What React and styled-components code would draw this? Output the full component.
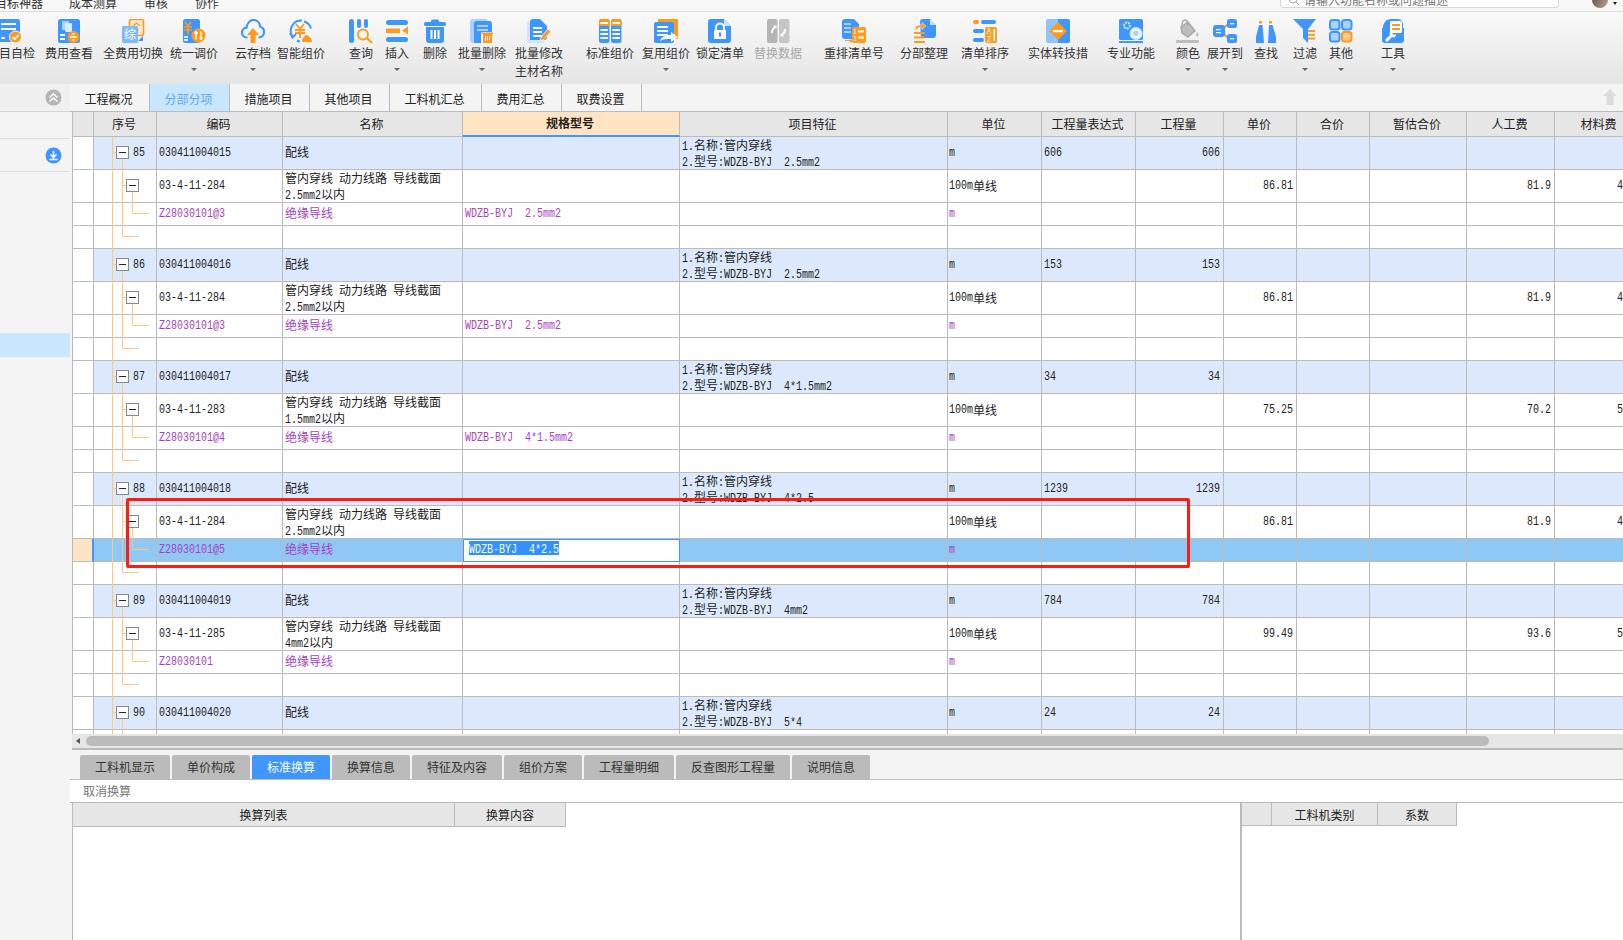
import React from 'react'
import styled, { createGlobalStyle } from 'styled-components'

const BLUE = '#3f96ff'
const ORANGE = '#ff9a1e'
const LIGHT = '#a9d2ff'
const LINE = '#bbbbbb'
const PURPLE = '#a83fc4'
const CJK = '"Noto Sans CJK SC", "Noto Sans", sans-serif'
const COLS = '21px 63px 126px 180px 217px 268px 94px 94px 88px 73px 73px 97px 88px 90px'

const GlobalStyle = createGlobalStyle`
    html, body {
        margin: 0;
        padding: 0;
        background: #fff;
    }
`

const Page = styled.div`
    position: relative;
    width: 1623px;
    height: 940px;
    overflow: hidden;
    display: flex;
    flex-direction: column;
    font-family: ${CJK};
    font-size: 12px;
    color: #222;
`

const TopBar = styled.div`
    flex: none;
    box-sizing: border-box;
    height: 12px;
    display: flex;
    align-items: flex-start;
    padding-right: 6px;
    overflow: hidden;
    background: #f8f8f8;
    border-bottom: 1px solid #dcdcdc;
`

const TopMenu = styled.span`
    margin-top: -6px;
    margin-left: ${p => p.$gap}px;
    line-height: 18px;
    color: #333;
    white-space: nowrap;
`

const SearchBox = styled.div`
    box-sizing: border-box;
    width: 279px;
    height: 20px;
    margin-top: -12px;
    margin-left: auto;
    padding: 0 0 1px 7px;
    display: flex;
    align-items: flex-end;
    gap: 4px;
    background: #fff;
    border: 1px solid #d8d8d8;
    border-radius: 3px;
    line-height: 12px;
    color: #777;
`

const Avatar = styled.div`
    width: 16px;
    height: 16px;
    margin-top: -8px;
    margin-left: 33px;
    border-radius: 50%;
    background: linear-gradient(120deg, #5b4a42, #b7a596);
`

const AvatarCaret = styled.div`
    width: 0;
    height: 0;
    margin: 2px 0 0 5px;
    border-left: 2px solid transparent;
    border-right: 2px solid transparent;
    border-top: 3px solid #222;
`

const Toolbar = styled.div`
    flex: none;
    height: 72px;
    display: flex;
    align-items: flex-start;
    overflow: hidden;
    background: linear-gradient(#f9f9f9, #e5e5e5);
`

const Tool = styled.div`
    flex: none;
    width: ${p => p.$w}px;
    margin-left: ${p => p.$gap}px;
    padding-top: 7px;
    display: flex;
    flex-direction: column;
    align-items: center;
    color: ${p => (p.$off ? '#a8a8a8' : '#333')};
`

const ToolIcon = styled.svg`
    flex: none;
    display: block;
    width: 24px;
    height: 24px;
`

const ToolLabel = styled.div`
    margin-top: 1px;
    line-height: 18px;
    text-align: center;
    white-space: nowrap;
`

const Caret = styled.div`
    margin-top: 6px;
    width: 0;
    height: 0;
    border-left: 3px solid transparent;
    border-right: 3px solid transparent;
    border-top: 3px solid #666;
`

const Body = styled.div`
    flex: 1;
    min-height: 0;
    display: flex;
`

const Sidebar = styled.div`
    flex: none;
    width: 70px;
    background: #f4f4f4;
`

const SideHead = styled.div`
    box-sizing: border-box;
    height: 28px;
    padding-right: 8px;
    display: flex;
    align-items: center;
    justify-content: flex-end;
    background: #f0f0f0;
    border-bottom: 1px solid #d4d4d4;
`

const SideRow = styled.div`
    box-sizing: border-box;
    height: ${p => p.$h}px;
    padding-right: 8px;
    display: flex;
    align-items: center;
    justify-content: flex-end;
    border-bottom: 1px solid #dedede;
`

const SideGap = styled.div`
    height: 161px;
`

const SideActive = styled.div`
    height: 24px;
    background: #c9e6ff;
`

const Main = styled.div`
    flex: 1;
    min-width: 0;
    display: flex;
    flex-direction: column;
    background: #f4f4f4;
`

const TabRow = styled.div`
    flex: none;
    box-sizing: border-box;
    height: 28px;
    display: flex;
    align-items: stretch;
    padding-right: 6px;
    border-bottom: 1px solid ${LINE};
`

const TopTab = styled.div`
    box-sizing: border-box;
    width: ${p => p.$w}px;
    padding: 2px 2px 0 0;
    display: flex;
    align-items: center;
    justify-content: center;
    border-right: 1px solid ${LINE};
    background: ${p => (p.$active ? '#c9e6ff' : 'transparent')};
    color: ${p => (p.$active ? '#5ea8f5' : '#222')};
`

const UpArrow = styled.svg`
    width: 14px;
    height: 16px;
    margin: 5px 0 0 auto;
`

const GridView = styled.div`
    flex: none;
    height: 622px;
    margin-left: 2px;
    overflow: hidden;
    background: #fff;
    border-left: 1px solid ${LINE};
`

const Row = styled.div`
    display: grid;
    grid-template-columns: ${COLS};
    width: 1572px;
    height: ${p => p.$h}px;
    background: ${p => p.$bg || '#fff'};
`

const HeadCell = styled.div`
    box-sizing: border-box;
    padding: 0 2px 2px 0;
    display: flex;
    align-items: center;
    justify-content: center;
    white-space: nowrap;
    background: ${p => (p.$focus ? '#ffe4c4' : '#e6e6e6')};
    font-weight: ${p => (p.$focus ? 700 : 400)};
    border-right: 1px solid ${LINE};
    border-bottom: ${p => (p.$focus ? `2px solid ${BLUE}` : `1px solid ${LINE}`)};
`

const Lat = styled.span`
    display: inline-block;
    font-family: "Liberation Mono", monospace;
    font-size: 10px;
    line-height: 12px;
    transform: scaleY(1.2);
`

const Cell = styled.div`
    box-sizing: border-box;
    display: flex;
    align-items: center;
    justify-content: ${p => (p.$right ? 'flex-end' : 'flex-start')};
    padding: 0 ${p => (p.$right ? 3 : 0)}px ${p => p.$lift ?? 0}px ${p => p.$left ?? 2}px;
    overflow: hidden;
    white-space: pre;
    color: ${p => (p.$purple ? PURPLE : 'inherit')};
    border-right: 1px solid ${LINE};
    border-bottom: 1px solid ${LINE};

    > ${Lat} {
        transform: translateY(1px) scaleY(1.2);
    }
`

const Gutter = styled(Cell)`
    background: ${p => (p.$current ? '#ffe4c4' : '#fff')};
    ${p => p.$current && `border-right: 2px solid ${BLUE};`}
`

const EditCell = styled(Cell)`
    align-items: flex-start;
    padding: 1px 0 0 5px;
    background: #fff;
    border: 1px solid ${BLUE};
`

const Selected = styled.span`
    display: inline-block;
    height: 14px;
    color: #fff;
    background: #3390ff;
    line-height: 14px;
`

const Lines = styled.div`
    align-self: flex-start;
    line-height: 13px;
    padding-top: 1px;
`

const Group = styled.div`
    position: relative;
    width: 1572px;
`

const TreeLines = styled.svg`
    position: absolute;
    left: 21px;
    top: 0;
    width: 63px;
    height: 112px;
    pointer-events: none;
`

const ScrollTrack = styled.div`
    flex: none;
    box-sizing: border-box;
    height: 16px;
    margin-left: 2px;
    padding: 2px 0 2px 4px;
    display: flex;
    align-items: flex-start;
    gap: 6px;
    background: #e6e6e6;
    border-bottom: 2px solid ${LINE};
`

const ScrollArrow = styled.div`
    margin-top: 2px;
    width: 0;
    height: 0;
    border-top: 3px solid transparent;
    border-bottom: 3px solid transparent;
    border-right: 4px solid #555;
`

const ScrollThumb = styled.div`
    width: 1403px;
    height: 10px;
    border-radius: 5px;
    background: ${LINE};
`

const DetailTabs = styled.div`
    flex: none;
    box-sizing: border-box;
    height: 30px;
    padding: 5px 0 0 10px;
    display: flex;
    gap: 2px;
    border-bottom: 1px solid ${LINE};
`

const DetailTab = styled.div`
    box-sizing: border-box;
    width: ${p => p.$w}px;
    padding-bottom: 2px;
    display: flex;
    align-items: center;
    justify-content: center;
    border-radius: 2px 2px 0 0;
    white-space: nowrap;
    background: ${p => (p.$active ? BLUE : LINE)};
    color: ${p => (p.$active ? '#fff' : '#333')};
`

const ActionRow = styled.div`
    flex: none;
    box-sizing: border-box;
    height: 23px;
    padding: 0 0 2px 13px;
    display: flex;
    align-items: center;
    background: #fff;
    color: #777;
    border-bottom: 1px solid ${LINE};
`

const Lower = styled.div`
    flex: 1;
    min-height: 0;
    margin-left: 2px;
    display: flex;
    background: #fff;
    border-left: 1px solid ${LINE};
`

const LowerLeft = styled.div`
    flex: none;
    width: 1167px;
    border-right: 2px solid ${LINE};
`

const LowerHead = styled.div`
    display: flex;
    height: ${p => p.$h}px;
`

const LowerCell = styled.div`
    box-sizing: border-box;
    width: ${p => p.$w}px;
    display: flex;
    align-items: center;
    justify-content: center;
    background: #e6e6e6;
    border-right: 1px solid ${LINE};
    border-bottom: 1px solid ${LINE};
`

const MarkBox = styled.div`
    position: absolute;
    left: 126px;
    top: 498px;
    box-sizing: border-box;
    width: 1064px;
    height: 70px;
    border: 3px solid #ff1a12;
    border-radius: 2px;
    pointer-events: none;
`

const Mixed = ({ text }) => (
    <>
        {text.split(/([\x00-\x7f]+)/).map((part, i) =>
            /^[\x00-\x7f]+$/.test(part) ? <Lat key={i}>{part}</Lat> : part,
        )}
    </>
)

const Doc = ({ x = 1, y = 0, w = 22, h = 24, fill = BLUE }) => (
    <rect x={x} y={y} width={w} height={h} rx="2.5" fill={fill} />
)

const Bars = ({ x, y, w, n = 3, step = 4, fill = '#fff', h = 2 }) => (
    <>
        {Array.from({ length: n }).map((_, i) => (
            <rect key={i} x={x} y={y + i * step} width={w} height={h} fill={fill} />
        ))}
    </>
)

const icons = {
    check: (
        <>
            <Doc x={0} w={21} h={23} />
            <Bars x={2} y={4} w={15} n={2} step={5} />
            <Bars x={2} y={18} w={4} n={1} />
            <circle cx="16.5" cy="18" r="6" fill={ORANGE} stroke="#f4f4f4" />
            <path d="M13.5 18l2.2 2.2 3.8-4" fill="none" stroke="#fff" strokeWidth="1.8" />
        </>
    ),
    fee: (
        <>
            <Doc />
            <rect x="5" y="2" width="7" height="9" rx="1" fill={LIGHT} />
            <rect x="8" y="4" width="7" height="9" rx="1" fill="#d8ebff" />
            <Bars x={3} y={15} w={5} n={2} step={4} />
            <circle cx="16.5" cy="18" r="6" fill={ORANGE} />
            <rect x="13" y="17.2" width="7" height="1.6" fill="#fff" />
            <circle cx="16.5" cy="15" r="1.1" fill="#fff" />
            <circle cx="16.5" cy="21" r="1.1" fill="#fff" />
        </>
    ),
    switchAll: (
        <>
            <rect x="8.5" y="0.5" width="14" height="16" rx="1.5" fill="#ffe9cc" stroke={ORANGE} strokeWidth="1.6" />
            <path d="M12 7l3.5-3 3.5 3M13 11h5M15.5 7v4" fill="none" stroke={ORANGE} strokeWidth="1.2" />
            <rect x="1" y="7" width="16" height="17" rx="1.5" fill="#7db9ff" />
            <text x="9" y="20" fontSize="12" textAnchor="middle" fill="#fff">综</text>
            <path d="M20 19l2-2v5h-5z" fill={BLUE} />
        </>
    ),
    adjust: (
        <>
            <Doc w={17} h={24} />
            <path d="M3 3l3 4 3-4M2 8h8M2 11h8M6 7v8" fill="none" stroke={ORANGE} strokeWidth="1.6" />
            <Bars x={2} y={17} w={4} n={2} step={3} fill="#d8ebff" />
            <circle cx="16.5" cy="16.5" r="7" fill={ORANGE} />
            <path d="M14 12.5v8M12.5 14.5l1.5-2 1.5 2M19 20.5v-8M17.5 18.5l1.5 2 1.5-2" fill="none" stroke="#fff" strokeWidth="1.3" />
        </>
    ),
    cloud: (
        <>
            <path d="M6.5 18.5C3 18.5 1 16 1 13.5c0-2.6 2-4.6 4.5-4.8C6.3 4.500 9 1 12.500 1c3.800 0 6.300 3 6.700 6.700 2.300.5 3.800 2.700 3.800 5.300 0 2.800-2 5.500-5.500 5.500" fill="none" stroke={BLUE} strokeWidth="2.2" />
            <path d="M12 9l6 7h-3.500v8h-5v-8H6z" fill={ORANGE} />
        </>
    ),
    smart: (
        <>
            <path d="M13 1.500A10.500 10.500 0 0 0 3 17M1 14l2.500 4.500L7 15" fill="none" stroke={BLUE} strokeWidth="2" />
            <path d="M15 2.500a10 10 0 0 1 7 7M11 22.500A10 10 0 0 1 8 21.500" fill="none" stroke={BLUE} strokeWidth="2" />
            <path d="M7 5l4 5 4-5M6 11h10M6 14h10M11 10v9" fill="none" stroke={ORANGE} strokeWidth="1.8" />
            <path d="M13 23c0-4 2-5 3.500-7h2c1.500 2 4.500 3 4.500 7z" fill={ORANGE} />
        </>
    ),
    query: (
        <>
            <rect x="0" y="0" width="5" height="24" rx="2.5" fill={BLUE} />
            <rect x="8" y="0" width="4" height="9" rx="2" fill={BLUE} />
            <rect x="15" y="0" width="4" height="9" rx="2" fill={BLUE} />
            <circle cx="14" cy="15.500" r="5" fill="#fff7ec" stroke={ORANGE} strokeWidth="1.8" />
            <path d="M18 19l5 5" stroke={ORANGE} strokeWidth="2.200" />
        </>
    ),
    insert: (
        <>
            <rect x="1" y="1" width="22" height="5" rx="2.500" fill={BLUE} />
            <rect x="1" y="9.500" width="14" height="4.500" fill={ORANGE} />
            <path d="M23 7.500v8l-6-4z" fill={ORANGE} />
            <rect x="1" y="18" width="22" height="5" rx="2.500" fill={BLUE} />
        </>
    ),
    trash: (
        <>
            <rect x="1" y="3" width="22" height="4" rx="1.500" fill={BLUE} />
            <rect x="8" y="0.500" width="8" height="4" rx="1.500" fill={BLUE} />
            <path d="M3 8h18v13a3 3 0 0 1-3 3H6a3 3 0 0 1-3-3z" fill={BLUE} />
            <rect x="7.500" y="11" width="2" height="9" fill="#fff" />
            <rect x="11" y="11" width="2" height="9" fill="#fff" />
            <rect x="14.500" y="11" width="2" height="9" fill="#fff" />
        </>
    ),
    batchDelete: (
        <>
            <Doc x={0} y={0} w={18} h={24} fill={LIGHT} />
            <path d="M4 5a3 3 0 0 1 3-3h12a3 3 0 0 1 3 3v19H4z" fill={BLUE} />
            <Bars x={7} y={6} w={11} n={2} step={4} fill="#a9d2ff" />
            <rect x="11" y="13" width="13" height="11" rx="1" fill="#f3f3f3" />
            <path d="M13 15h9v9h-9zM12 13.500h11v1.500H12z" fill={ORANGE} />
            <path d="M15.500 17v5M17.500 17v5M19.500 17v5" stroke="#fff" strokeWidth="1" />
        </>
    ),
    batchEdit: (
        <>
            <Doc x={0} y={2} w={17} h={22} fill="#cfe5ff" />
            <path d="M3 3a3 3 0 0 1 3-3h7l7 7v11a3 3 0 0 1-3 3H3z" fill={BLUE} />
            <Bars x={6} y={8} w={9} n={3} step={4} />
            <path d="M13 22l1-4 7-8 3 2.500-7 8z" fill={ORANGE} stroke="#fff" strokeWidth="0.7" />
        </>
    ),
    standard: (
        <>
            {[1, 13].map(x => (
                <g key={x}>
                    <rect x={x} y="0" width="10.500" height="24" rx="2.500" fill={BLUE} />
                    <path d={`M${x} 7V2.500A2.500 2.500 0 0 1 ${x + 2.5} 0H${x + 8}a2.500 2.500 0 0 1 2.500 2.500V7z`} fill={ORANGE} />
                    <Bars x={x + 1.5} y={3} w={7.500} n={1} />
                    <Bars x={x + 1.5} y={10} w={7.500} n={3} step={4} />
                </g>
            ))}
        </>
    ),
    reuse: (
        <>
            <rect x="4" y="0" width="20" height="20" rx="1" fill={ORANGE} />
            <rect x="0" y="3" width="20" height="21" rx="2" fill={BLUE} />
            <Bars x={3} y={7} w={11} n={3} step={4} />
            <path d="M6 22c1-4 6-6 11-6v-3l7 5-7 5v-3c-5 0-8 0-11 2z" fill="#fff" />
        </>
    ),
    lock: (
        <>
            <path d="M3 0h13l7 7v14a3 3 0 0 1-3 3H3a3 3 0 0 1-3-3V3a3 3 0 0 1 3-3z" fill={BLUE} />
            <path d="M16 0l7 7h-7z" fill="#cfe5ff" />
            <path d="M8 11V8.500a4 4 0 0 1 8 0V11" fill="none" stroke="#fff" strokeWidth="2" />
            <rect x="6" y="11" width="12" height="9" rx="1" fill="#fff" />
            <rect x="11" y="13.500" width="2" height="4" fill={BLUE} />
        </>
    ),
    replace: (
        <>
            <rect x="1" y="0" width="10.500" height="24" rx="2" fill="#b5b5b5" />
            <rect x="13" y="0" width="10.500" height="24" rx="2" fill="#c6c6c6" />
            <path d="M5 14c0-3 1-5 3-6l-1-1.500h3.500V10L9.500 9C8 10 7 11.500 7 14z" fill="#fff" />
            <path d="M20 10c0 3-1 5-3 6l1 1.500h-3.500V14l1 1c1.500-1 2.500-2.500 2.500-5z" fill="#fff" />
        </>
    ),
    renumber: (
        <>
            <path d="M0 3a3 3 0 0 1 3-3h9l5 5v15H3a3 3 0 0 1-3-3z" fill={BLUE} />
            <Bars x={2} y={4} w={7} n={3} step={4} fill={LIGHT} />
            <rect x="10" y="8" width="14" height="16" rx="2" fill={ORANGE} />
            <Bars x={16} y={11.500} w={6} n={2} step={6} />
            <text x="13" y="15" fontSize="6" textAnchor="middle" fill="#fff">1</text>
            <text x="13" y="21.500" fontSize="6" textAnchor="middle" fill="#fff">2</text>
            <path d="M3 21h5v-2l3 3-3 2v-2H3z" fill={ORANGE} />
        </>
    ),
    organize: (
        <>
            <path d="M8 3a3 3 0 0 1 3-3h7l6 6v10a3 3 0 0 1-3 3H9z" fill={BLUE} />
            <path d="M18 0l6 6h-6z" fill="#cfe5ff" />
            <path d="M3 11C3 7 6 5.500 10 6V3.500L14 7l-4 3.500V8.500C7 8 5 9 5 11z" fill={ORANGE} stroke="#f4f4f4" strokeWidth="0.5" />
            <Bars x={2} y={13} w={11} n={3} step={4.500} fill={ORANGE} />
        </>
    ),
    sort: (
        <>
            <rect x="0" y="1" width="6" height="4" rx="2" fill={ORANGE} />
            <rect x="8" y="1" width="15" height="4" rx="2" fill={BLUE} />
            <rect x="0" y="10" width="11" height="4" rx="2" fill={BLUE} />
            <rect x="0" y="19" width="11" height="4" rx="2" fill={BLUE} />
            <rect x="12" y="8" width="12" height="16" rx="2" fill={ORANGE} />
            <text x="16" y="15" fontSize="7" textAnchor="middle" fill="#fff">A</text>
            <text x="16" y="23" fontSize="7" textAnchor="middle" fill="#fff">Z</text>
            <rect x="20.500" y="10" width="1.600" height="12" fill="#fff" />
        </>
    ),
    entity: (
        <>
            <path d="M2 0h10v24H2a2 2 0 0 1-2-2V2a2 2 0 0 1 2-2z" fill="#8fc4ff" />
            <path d="M12 0h10a2 2 0 0 1 2 2v20a2 2 0 0 1-2 2H12z" fill={BLUE} />
            <path d="M12 3l9 9-9 9-9-9z" fill={ORANGE} />
            <rect x="7" y="11" width="10" height="2.200" fill="#fff" />
        </>
    ),
    special: (
        <>
            <rect x="0" y="0" width="24" height="21" rx="1.500" fill={BLUE} />
            <rect x="0" y="22" width="24" height="2" fill={BLUE} />
            <circle cx="8" cy="6.500" r="3" fill="none" stroke="#d8ebff" strokeWidth="2" strokeDasharray="2 1" />
            <circle cx="17" cy="14.500" r="6.500" fill="#d8ebff" />
            <circle cx="17" cy="14.500" r="3.500" fill={LIGHT} stroke="#fff" strokeWidth="1.500" />
        </>
    ),
    bucket: (
        <>
            <path d="M5 8l7-5 7 9-7 6-6-4z" fill="#bdbdbd" stroke="#a8a8a8" strokeWidth="1.400" />
            <path d="M6 7c0-4 1-6 3-6s3 2 3 6" fill="none" stroke="#a8a8a8" strokeWidth="1.400" />
            <path d="M21 13c1.500 2 2 3 1 4s-2 0-2-1z" fill="#bdbdbd" />
            <rect x="0" y="21" width="23" height="3" rx="1" fill="#bdbdbd" />
        </>
    ),
    expand: (
        <>
            <path d="M9 11l6-6M9 13l6 6" stroke={ORANGE} strokeWidth="1.800" />
            <rect x="0" y="6" width="12" height="12" rx="3" fill={BLUE} />
            <Bars x={3} y={10} w={5} n={2} step={3} h={1.200} />
            <rect x="14" y="0" width="10" height="9" rx="2.500" fill={BLUE} />
            <rect x="14" y="15" width="10" height="9" rx="2.500" fill={BLUE} />
            <rect x="17" y="4" width="4" height="1.300" fill="#fff" />
            <rect x="17" y="19" width="4" height="1.300" fill="#fff" />
        </>
    ),
    find: (
        <>
            <rect x="5" y="2" width="3" height="2.500" fill={ORANGE} />
            <rect x="15" y="2" width="3" height="2.500" fill={ORANGE} />
            <path d="M5 6h3.500l1.500 18H2v-6z" fill={BLUE} />
            <path d="M15 6h3.500L22 18v6h-8z" fill={BLUE} />
        </>
    ),
    filter: (
        <>
            <path d="M0 0h23l-8 10v14l-5-5v-9z" fill={BLUE} />
            <Bars x={15} y={11} w={7} n={3} step={3.800} fill={ORANGE} h={2} />
        </>
    ),
    other: (
        <>
            {[[1, 1, BLUE, LIGHT], [13, 1, BLUE, LIGHT], [1, 13, BLUE, LIGHT], [13, 13, ORANGE, '#ffc98a']].map(([x, y, s, f]) => (
                <rect key={`${x}${y}`} x={x} y={y} width="9.500" height="9.500" rx="2.500" fill={f} stroke={s} strokeWidth="2" />
            ))}
        </>
    ),
    tool: (
        <>
            <path d="M2 9c0-5 3-9 8-9h7c3 0 5 3 5 6v3h1v12a3 3 0 0 1-3 3H4a3 3 0 0 1-3-3V9z" fill={BLUE} />
            <rect x="9" y="2" width="12" height="12" rx="1.500" fill="#fff" />
            <Bars x={11} y={5} w={8} n={2} step={4} fill={ORANGE} />
            <path d="M4 21l5-5c-1-2 0-4 3-4l-1 2 2 2 2-1c0 3-2 4-4 3l-5 5z" fill="#fff" />
        </>
    ),
}

const tools = [
    { label: '项目自检', w: 48, gap: -13, icon: 'check' },
    { label: '费用查看', w: 48, gap: 10, icon: 'fee' },
    { label: '全费用切换', w: 60, gap: 10, icon: 'switchAll' },
    { label: '统一调价', w: 48, gap: 7, icon: 'adjust', caret: true },
    { label: '云存档', w: 36, gap: 17, icon: 'cloud', caret: true },
    { label: '智能组价', w: 48, gap: 6, icon: 'smart' },
    { label: '查询', w: 24, gap: 24, icon: 'query', caret: true },
    { label: '插入', w: 24, gap: 12, icon: 'insert', caret: true },
    { label: '删除', w: 24, gap: 14, icon: 'trash' },
    { label: '批量删除', w: 48, gap: 11, icon: 'batchDelete', caret: true },
    { label: '批量修改', second: '主材名称', w: 48, gap: 9, icon: 'batchEdit' },
    { label: '标准组价', w: 48, gap: 23, icon: 'standard' },
    { label: '复用组价', w: 48, gap: 8, icon: 'reuse', caret: true },
    { label: '锁定清单', w: 48, gap: 6, icon: 'lock' },
    { label: '替换数据', w: 48, gap: 10, icon: 'replace', off: true },
    { label: '重排清单号', w: 60, gap: 22, icon: 'renumber' },
    { label: '分部整理', w: 48, gap: 16, icon: 'organize' },
    { label: '清单排序', w: 48, gap: 13, icon: 'sort', caret: true },
    { label: '实体转技措', w: 60, gap: 19, icon: 'entity' },
    { label: '专业功能', w: 48, gap: 19, icon: 'special', caret: true },
    { label: '颜色', w: 24, gap: 21, icon: 'bucket', caret: true },
    { label: '展开到', w: 36, gap: 7, icon: 'expand', caret: true },
    { label: '查找', w: 24, gap: 11, icon: 'find' },
    { label: '过滤', w: 24, gap: 15, icon: 'filter', caret: true },
    { label: '其他', w: 24, gap: 12, icon: 'other', caret: true },
    { label: '工具', w: 24, gap: 28, icon: 'tool', caret: true },
]

const topTabs = [
    ['工程概况', 80], ['分部分项', 80, true], ['措施项目', 80], ['其他项目', 80],
    ['工料机汇总', 92], ['费用汇总', 80], ['取费设置', 80],
]

const headers = [
    '', '序号', '编码', '名称', '规格型号', '项目特征', '单位', '工程量表达式',
    '工程量', '单价', '合价', '暂估合价', '人工费', '材料费',
]

const detailTabs = [
    ['工料机显示', 90], ['单价构成', 78], ['标准换算', 78, true], ['换算信息', 78],
    ['特征及内容', 90], ['组价方案', 78], ['工程量明细', 90], ['反查图形工程量', 114], ['说明信息', 78],
]

const groups = [
    { no: 85, code: '030411004015', qty: '606', spec: '2.5mm2', sub: '03-4-11-284', size: '2.5mm2', price: '86.81', labor: '81.9', mat: '4.91', part: 'Z28030101@3', partSpec: 'WDZB-BYJ  2.5mm2' },
    { no: 86, code: '030411004016', qty: '153', spec: '2.5mm2', sub: '03-4-11-284', size: '2.5mm2', price: '86.81', labor: '81.9', mat: '4.91', part: 'Z28030101@3', partSpec: 'WDZB-BYJ  2.5mm2' },
    { no: 87, code: '030411004017', qty: '34', spec: '4*1.5mm2', sub: '03-4-11-283', size: '1.5mm2', price: '75.25', labor: '70.2', mat: '5.05', part: 'Z28030101@4', partSpec: 'WDZB-BYJ  4*1.5mm2' },
    { no: 88, code: '030411004018', qty: '1239', spec: '4*2.5', sub: '03-4-11-284', size: '2.5mm2', price: '86.81', labor: '81.9', mat: '4.91', part: 'Z28030101@5', partSpec: 'WDZB-BYJ  4*2.5', current: true },
    { no: 89, code: '030411004019', qty: '784', spec: '4mm2', sub: '03-4-11-285', size: '4mm2', price: '99.49', labor: '93.6', mat: '5.89', part: 'Z28030101', partSpec: '' },
    { no: 90, code: '030411004020', qty: '24', spec: '5*4', cutOff: true },
]

const Box = ({ x, y }) => (
    <>
        <rect x={x + 0.5} y={y + 0.5} width="12" height="12" fill="#fff" stroke="#888" />
        <rect x={x + 3} y={y + 6} width="7" height="1" fill="#222" />
    </>
)

const Tree = () => (
    <TreeLines viewBox="0 0 63 112">
        <path
            d="M18.500 0V112M18.500 15.500H22M28.500 22V99.500H45M28.500 48.500H32M38.500 55V76.500H55"
            fill="none"
            stroke="#ffc87a"
        />
        <Box x={22} y={9} />
        <Box x={32} y={42} />
    </TreeLines>
)

const EmptyCells = ({ n }) => Array.from({ length: n }).map((_, i) => <Cell key={i} />)

const BillGroup = ({ g }) => (
    <Group>
        <Row $h={33} $bg="#dce9fd">
            <Gutter />
            <Cell $left={39}><Lat>{g.no}</Lat></Cell>
            <Cell><Lat>{g.code}</Lat></Cell>
            <Cell $lift={3}>配线</Cell>
            <Cell />
            <Cell>
                <Lines>
                    <Mixed text="1.名称:管内穿线" /><br />
                    <Mixed text={`2.型号:WDZB-BYJ  ${g.spec}`} />
                </Lines>
            </Cell>
            <Cell $left={1}><Lat>m</Lat></Cell>
            <Cell><Lat>{g.qty}</Lat></Cell>
            <Cell $right><Lat>{g.qty}</Lat></Cell>
            <EmptyCells n={5} />
        </Row>
        {g.cutOff ? (
            <Row $h={33}>
                <Gutter />
                <EmptyCells n={13} />
            </Row>
        ) : (
            <>
                <Row $h={33}>
                    <Gutter />
                    <Cell />
                    <Cell><Lat>{g.sub}</Lat></Cell>
                    <Cell>
                        <Lines>
                            <Mixed text="管内穿线 动力线路 导线截面" /><br />
                            <Mixed text={`${g.size}以内`} />
                        </Lines>
                    </Cell>
                    <Cell />
                    <Cell />
                    <Cell $left={1} $lift={1}><Mixed text="100m单线" /></Cell>
                    <Cell />
                    <Cell />
                    <Cell $right><Lat>{g.price}</Lat></Cell>
                    <Cell />
                    <Cell />
                    <Cell $right><Lat>{g.labor}</Lat></Cell>
                    <Cell $right><Lat>{g.mat}</Lat></Cell>
                </Row>
                <Row $h={23} $bg={g.current ? '#90c8f5' : '#fff'}>
                    <Gutter $current={g.current} />
                    <Cell />
                    <Cell $purple><Lat>{g.part}</Lat></Cell>
                    <Cell $purple $lift={3}>绝缘导线</Cell>
                    {g.current ? (
                        <EditCell><Selected><Lat>{g.partSpec}</Lat></Selected></EditCell>
                    ) : (
                        <Cell $purple><Lat>{g.partSpec}</Lat></Cell>
                    )}
                    <Cell />
                    <Cell $left={1} $purple><Lat>m</Lat></Cell>
                    <EmptyCells n={7} />
                </Row>
                <Row $h={23}>
                    <Gutter />
                    <EmptyCells n={13} />
                </Row>
            </>
        )}
        <Tree />
    </Group>
)

export default function App() {
    return (
        <Page>
            <GlobalStyle />
            <TopBar>
                <TopMenu $gap={-5}>目标神器</TopMenu>
                <TopMenu $gap={26}>成本测算</TopMenu>
                <TopMenu $gap={27}>审核</TopMenu>
                <TopMenu $gap={27}>协作</TopMenu>
                <SearchBox>
                    <svg width="12" height="12" viewBox="0 0 12 12">
                        <circle cx="5" cy="5" r="4" fill="none" stroke="#aaa" />
                        <path d="M8 8l3 3" stroke="#aaa" />
                    </svg>
                    请输入功能名称或问题描述
                </SearchBox>
                <Avatar />
                <AvatarCaret />
            </TopBar>

            <Toolbar>
                {tools.map(t => (
                    <Tool key={t.label} $w={t.w} $gap={t.gap} $off={t.off}>
                        <ToolIcon viewBox="0 0 24 24">{icons[t.icon]}</ToolIcon>
                        <ToolLabel>
                            {t.label}
                            {t.second && <><br />{t.second}</>}
                        </ToolLabel>
                        {t.caret && <Caret />}
                    </Tool>
                ))}
            </Toolbar>

            <Body>
                <Sidebar>
                    <SideHead>
                        <svg width="17" height="17" viewBox="0 0 17 17">
                            <circle cx="8.500" cy="8.500" r="8" fill="#b5b5b5" />
                            <path d="M4.500 8.500l4-3.500 4 3.500M4.500 12.500l4-3.500 4 3.500" fill="none" stroke="#fff" strokeWidth="1.500" />
                        </svg>
                    </SideHead>
                    <SideRow $h={27} />
                    <SideRow $h={33}>
                        <svg width="17" height="17" viewBox="0 0 17 17">
                            <circle cx="8.500" cy="8.500" r="8" fill={BLUE} />
                            <path d="M8.500 4v6M5.500 7.500l3 3 3-3M4.500 12.500h8" fill="none" stroke="#fff" strokeWidth="1.500" />
                        </svg>
                    </SideRow>
                    <SideGap />
                    <SideActive />
                </Sidebar>

                <Main>
                    <TabRow>
                        {topTabs.map(([label, w, active]) => (
                            <TopTab key={label} $w={w} $active={active}>{label}</TopTab>
                        ))}
                        <UpArrow viewBox="0 0 14 16">
                            <path d="M7 0l7 7h-3.500v9h-7V7H0z" fill="#dcdcdc" />
                        </UpArrow>
                    </TabRow>

                    <GridView>
                        <Row $h={25}>
                            {headers.map((h, i) => (
                                <HeadCell key={i} $focus={h === '规格型号'}>{h}</HeadCell>
                            ))}
                        </Row>
                        {groups.map(g => <BillGroup key={g.no} g={g} />)}
                    </GridView>

                    <ScrollTrack>
                        <ScrollArrow />
                        <ScrollThumb />
                    </ScrollTrack>

                    <DetailTabs>
                        {detailTabs.map(([label, w, active]) => (
                            <DetailTab key={label} $w={w} $active={active}>{label}</DetailTab>
                        ))}
                    </DetailTabs>

                    <ActionRow>取消换算</ActionRow>

                    <Lower>
                        <LowerLeft>
                            <LowerHead $h={24}>
                                <LowerCell $w={382}>换算列表</LowerCell>
                                <LowerCell $w={111}>换算内容</LowerCell>
                            </LowerHead>
                        </LowerLeft>
                        <LowerHead $h={23}>
                            <LowerCell $w={30} />
                            <LowerCell $w={106}>工料机类别</LowerCell>
                            <LowerCell $w={79}>系数</LowerCell>
                        </LowerHead>
                    </Lower>
                </Main>
            </Body>

            <MarkBox />
        </Page>
    )
}
